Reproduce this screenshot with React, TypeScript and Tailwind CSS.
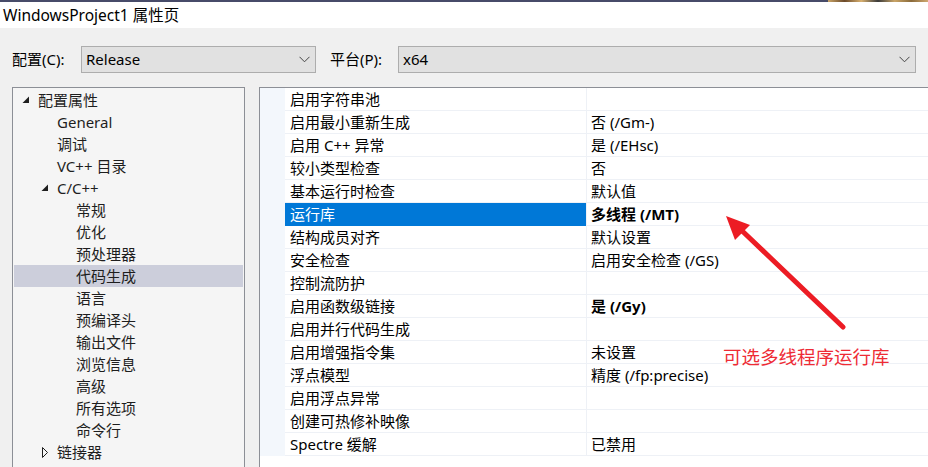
const font = {
  fontFamily: '"Segoe UI", "Noto Sans", "Noto Sans CJK SC", sans-serif',
};

type TreeItem = { label: string; level: number; icon?: "open" | "closed"; selected?: boolean };

const tree: TreeItem[] = [
  { label: "配置属性", level: 0, icon: "open" },
  { label: "General", level: 1 },
  { label: "调试", level: 1 },
  { label: "VC++ 目录", level: 1 },
  { label: "C/C++", level: 1, icon: "open" },
  { label: "常规", level: 2 },
  { label: "优化", level: 2 },
  { label: "预处理器", level: 2 },
  { label: "代码生成", level: 2, selected: true },
  { label: "语言", level: 2 },
  { label: "预编译头", level: 2 },
  { label: "输出文件", level: 2 },
  { label: "浏览信息", level: 2 },
  { label: "高级", level: 2 },
  { label: "所有选项", level: 2 },
  { label: "命令行", level: 2 },
  { label: "链接器", level: 1, icon: "closed" },
];

type Prop = { name: string; value: string; bold?: boolean; selected?: boolean };

const props: Prop[] = [
  { name: "启用字符串池", value: "" },
  { name: "启用最小重新生成", value: "否 (/Gm-)" },
  { name: "启用 C++ 异常", value: "是 (/EHsc)" },
  { name: "较小类型检查", value: "否" },
  { name: "基本运行时检查", value: "默认值" },
  { name: "运行库", value: "多线程 (/MT)", bold: true, selected: true },
  { name: "结构成员对齐", value: "默认设置" },
  { name: "安全检查", value: "启用安全检查 (/GS)" },
  { name: "控制流防护", value: "" },
  { name: "启用函数级链接", value: "是 (/Gy)", bold: true },
  { name: "启用并行代码生成", value: "" },
  { name: "启用增强指令集", value: "未设置" },
  { name: "浮点模型", value: "精度 (/fp:precise)" },
  { name: "启用浮点异常", value: "" },
  { name: "创建可热修补映像", value: "" },
  { name: "Spectre 缓解", value: "已禁用" },
];

function Chevron() {
  return (
    <svg width="11" height="7" viewBox="0 0 11 7" className="shrink-0">
      <path d="M0.5 0.8 L5.5 5.8 L10.5 0.8" fill="none" stroke="#444" strokeWidth="1" />
    </svg>
  );
}

function Combo({ value, width }: { value: string; width: string }) {
  return (
    <div
      className={`${width} h-[27px] flex items-center justify-between pl-[4px] pr-[5px] bg-[#e1e1e1] border border-[#adadad] text-[15px] text-black`}
    >
      <span>{value}</span>
      <Chevron />
    </div>
  );
}

function TreeIcon({ kind }: { kind?: "open" | "closed" }) {
  if (kind === "open")
    return (
      <svg width="16" height="8" viewBox="0 0 16 8" className="shrink-0">
        <polygon points="7,0.5 7,7 0.5,7" fill="#1e1e1e" />
      </svg>
    );
  if (kind === "closed")
    return (
      <svg width="16" height="11" viewBox="0 0 16 11" className="shrink-0">
        <polygon points="1.5,0.5 6.5,5.5 1.5,10.5" fill="none" stroke="#1e1e1e" strokeWidth="1" />
      </svg>
    );
  return <span className="w-[16px] shrink-0" />;
}

export default function App() {
  return (
    <div
      className="relative w-[928px] h-[467px] overflow-hidden bg-[#f0f0f0] text-black"
      style={font}
    >
      {/* strip of the window behind */}
      <div className="flex h-[2px]">
        <div className="flex-1 bg-[#474b69]" />
        <div className="w-[100px] bg-[linear-gradient(90deg,#c9a467,#6b4a2a,#d8b070,#3a3a3a,#c9a467,#8a6a3a,#d0a870)]" />
      </div>

      {/* title bar */}
      <div className="h-[26px] bg-white pl-[3px] text-[15.5px] leading-[26px]">
        WindowsProject1 属性页
      </div>

      {/* configuration row */}
      <div className="mt-[18px] flex items-center h-[27px] text-[15px]">
        <span className="pl-[12px] w-[81px]">配置(C):</span>
        <Combo value="Release" width="w-[235px]" />
        <span className="ml-[14px] w-[68px]">平台(P):</span>
        <Combo value="x64" width="w-[518px]" />
      </div>

      {/* panels */}
      <div className="mt-[14px] flex gap-[14px] pl-[12px] h-[400px]">
        {/* tree */}
        <div className="w-[233px] shrink-0 border border-[#8c8f96] bg-[#f5f5f5] pt-[1px]">
          {tree.map((t) => (
            <div
              key={t.label}
              className={`mx-px h-[22px] flex items-center text-[15px] text-[#1e1e1e] ${
                t.selected ? "bg-[#cccedb]" : ""
              }`}
              style={{ paddingLeft: 8 + t.level * 19 }}
            >
              <TreeIcon kind={t.icon} />
              <span>{t.label}</span>
            </div>
          ))}
        </div>

        {/* property grid */}
        <div className="w-[700px] shrink-0 border-l border-t border-[#8c8f96] bg-white">
          {props.map((p) => (
            <div key={p.name} className="flex h-[23px] text-[15px]">
              <div className="w-[25px] shrink-0 bg-[#f3f7fc]" />
              <div
                className={`w-[301px] shrink-0 pl-[5px] leading-[22px] border-b ${
                  p.selected
                    ? "bg-[#0078d7] text-white border-[#0078d7]"
                    : "border-[#eef1f6]"
                }`}
              >
                {p.name}
              </div>
              <div
                className={`flex-1 pl-[4px] leading-[22px] border-l border-b border-[#eef1f6] ${
                  p.bold ? "font-bold" : ""
                }`}
              >
                {p.value}
              </div>
            </div>
          ))}
        </div>
      </div>

      {/* red annotation arrow */}
      <svg
        className="absolute left-0 top-0 pointer-events-none"
        width="928"
        height="467"
        viewBox="0 0 928 467"
      >
        <line x1="843" y1="327" x2="737" y2="226" stroke="#ec1c24" strokeWidth="5" strokeLinecap="round" />
        <polygon points="726,216 750,225 735,240" fill="#ec1c24" />
      </svg>
      <div className="absolute left-[723px] top-[344px] text-[18.5px] leading-[26px] text-[#ee2b35]">
        可选多线程序运行库
      </div>
    </div>
  );
}
